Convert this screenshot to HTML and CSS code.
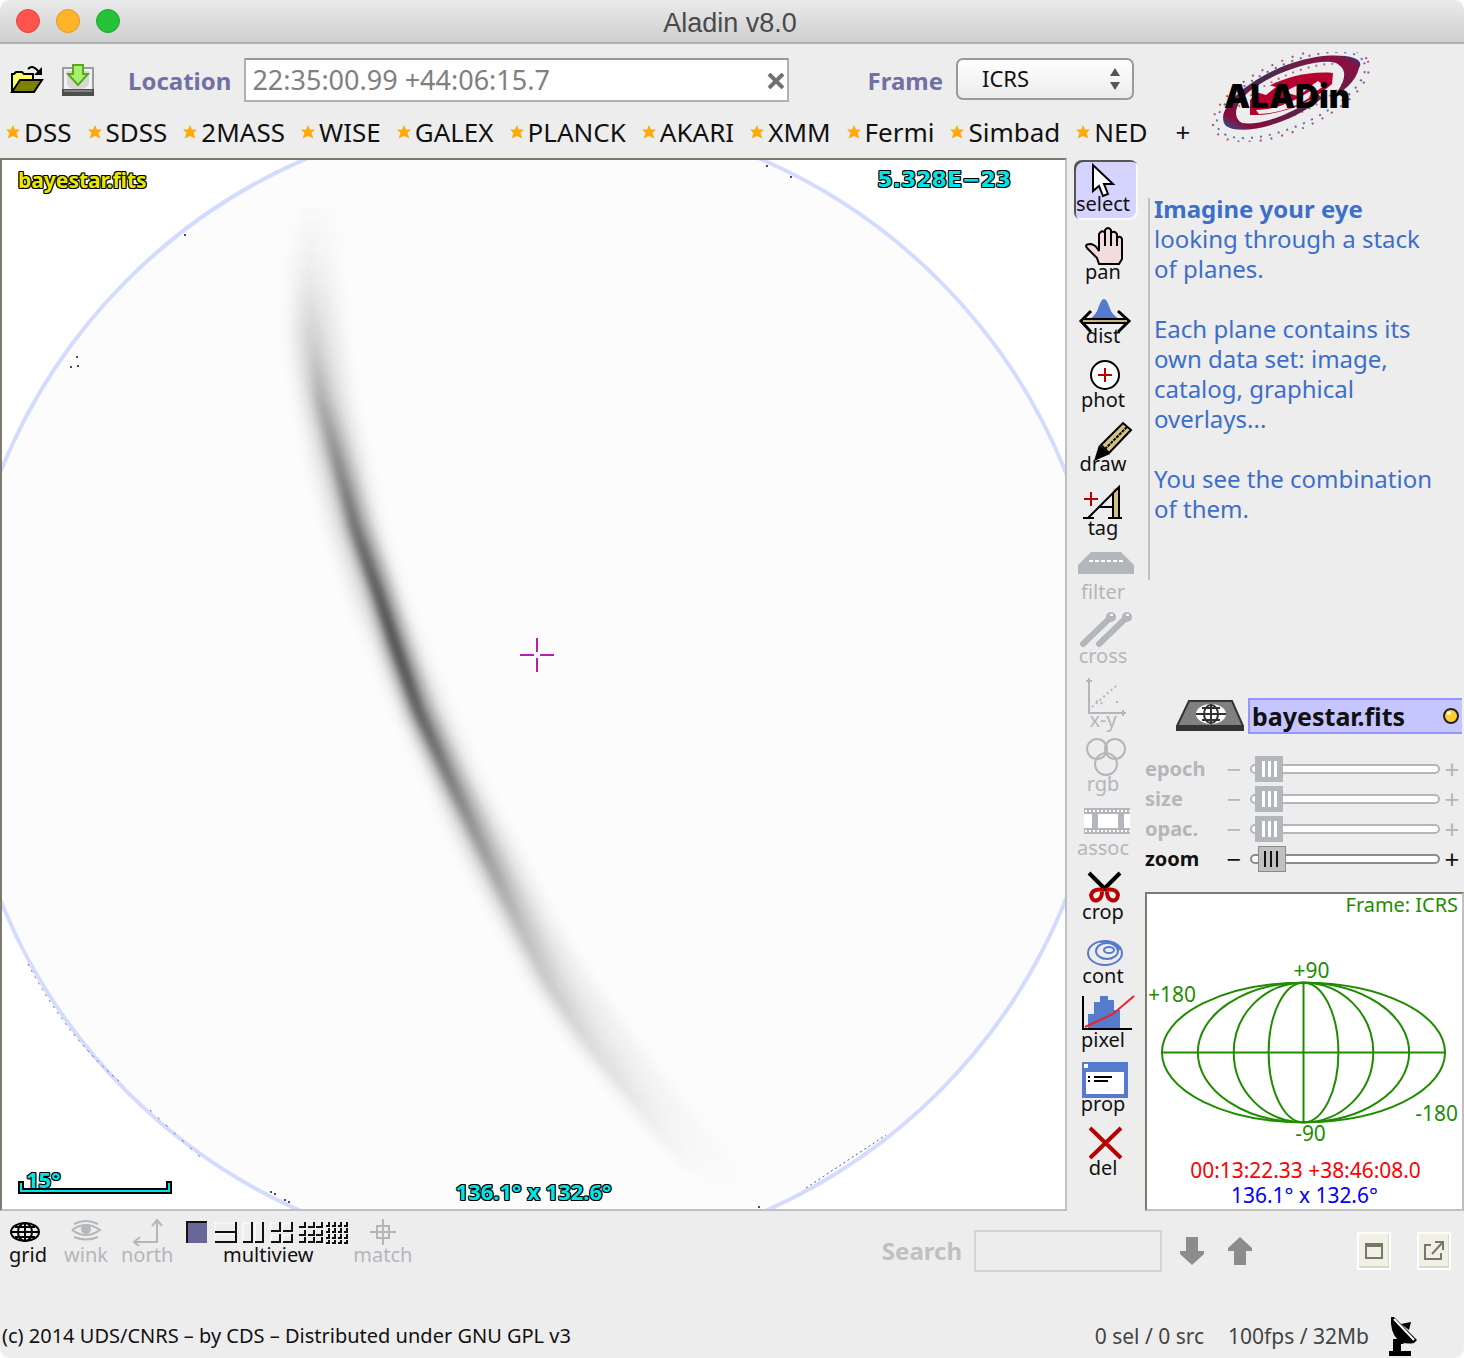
FILE: index.html
```html
<!DOCTYPE html>
<html lang="en">
<head>
<meta charset="utf-8">
<title>Aladin v8.0</title>
<link rel="stylesheet" href="styles.css">
</head>
<body>
<div class="window">
  <header class="titlebar">
    <div class="lights">
      <button class="light close" aria-label="Close"></button>
      <button class="light minimize" aria-label="Minimize"></button>
      <button class="light maximize" aria-label="Maximize"></button>
    </div>
    <h1 class="title">Aladin v8.0</h1>
  </header>

  <div class="top">
    <div class="top-left">
      <div class="location-row">
        <button class="plain" aria-label="Open">
          <svg width="34" height="32" viewBox="0 0 34 32">
            <path d="M2 28V10h2l2-2h6l2 2h9v6" fill="#ffff63" stroke="#000" stroke-width="2"/>
            <path d="M2 28l8-12h22l-8 12z" fill="#808000" stroke="#000" stroke-width="2"/>
            <path d="M18 5q5-5 11 3" fill="none" stroke="#000" stroke-width="2"/>
            <path d="M32 3v8h-8z"/>
          </svg>
        </button>
        <button class="plain save" aria-label="Save">
          <svg width="34" height="34" viewBox="0 0 34 34">
            <rect x="2" y="5" width="30" height="27" fill="#f2f2f2" stroke="#9a9d9a" stroke-width="2"/>
            <path d="M6 8h22v13q-3 5-8 5h-6q-6 0-8-5z" fill="#d5d8d5"/>
            <rect x="1" y="26" width="32" height="7" fill="#4b504b"/>
            <path d="M3 28h28" stroke="#7d827d" stroke-width="2"/>
            <path d="M12 2h10v9h5l-10 11L7 11h5z" fill="#a6f06a" stroke="#5aa61e" stroke-width="2"/>
          </svg>
        </button>
        <label class="heading" for="location">Location</label>
        <div class="location-box">
          <input id="location" type="text" value="22:35:00.99 +44:06:15.7">
          <button class="clear" aria-label="Clear location"><svg width="18" height="16" viewBox="0 0 18 16"><path d="M2 1l14 14M16 1L2 15" stroke="#707070" stroke-width="4"/></svg></button>
        </div>
        <label class="heading frame-label" for="frame">Frame</label>
        <div class="frame-box">
          <select id="frame"><option>ICRS</option></select>
          <svg class="updown" width="10" height="22" viewBox="0 0 10 22"><path d="M5 0l5 8H0zM5 22l5-8H0z" fill="#555"/></svg>
        </div>
      </div>
      <nav class="bookmarks">
        <a href="#dss"><svg class="star" viewBox="0 0 14 14"><path d="M7 0l2 4.600h5l-3.500 3.400 2 5.500L7 11l-5.500 2.500 2-5.500L0 4.600h5z"/></svg>DSS</a>
        <a href="#sdss"><svg class="star" viewBox="0 0 14 14"><path d="M7 0l2 4.600h5l-3.500 3.400 2 5.500L7 11l-5.500 2.500 2-5.500L0 4.600h5z"/></svg>SDSS</a>
        <a href="#2mass"><svg class="star" viewBox="0 0 14 14"><path d="M7 0l2 4.600h5l-3.500 3.400 2 5.500L7 11l-5.500 2.500 2-5.500L0 4.600h5z"/></svg>2MASS</a>
        <a href="#wise"><svg class="star" viewBox="0 0 14 14"><path d="M7 0l2 4.600h5l-3.500 3.400 2 5.500L7 11l-5.500 2.500 2-5.500L0 4.600h5z"/></svg>WISE</a>
        <a href="#galex"><svg class="star" viewBox="0 0 14 14"><path d="M7 0l2 4.600h5l-3.500 3.400 2 5.500L7 11l-5.500 2.500 2-5.500L0 4.600h5z"/></svg>GALEX</a>
        <a href="#planck"><svg class="star" viewBox="0 0 14 14"><path d="M7 0l2 4.600h5l-3.500 3.400 2 5.500L7 11l-5.500 2.500 2-5.500L0 4.600h5z"/></svg>PLANCK</a>
        <a href="#akari"><svg class="star" viewBox="0 0 14 14"><path d="M7 0l2 4.600h5l-3.500 3.400 2 5.500L7 11l-5.500 2.500 2-5.500L0 4.600h5z"/></svg>AKARI</a>
        <a href="#xmm"><svg class="star" viewBox="0 0 14 14"><path d="M7 0l2 4.600h5l-3.500 3.400 2 5.500L7 11l-5.500 2.500 2-5.500L0 4.600h5z"/></svg>XMM</a>
        <a href="#fermi"><svg class="star" viewBox="0 0 14 14"><path d="M7 0l2 4.600h5l-3.500 3.400 2 5.500L7 11l-5.500 2.500 2-5.500L0 4.600h5z"/></svg>Fermi</a>
        <a href="#simbad"><svg class="star" viewBox="0 0 14 14"><path d="M7 0l2 4.600h5l-3.500 3.400 2 5.500L7 11l-5.500 2.500 2-5.500L0 4.600h5z"/></svg>Simbad</a>
        <a href="#ned"><svg class="star" viewBox="0 0 14 14"><path d="M7 0l2 4.600h5l-3.500 3.400 2 5.500L7 11l-5.500 2.500 2-5.500L0 4.600h5z"/></svg>NED</a>
        <button class="plain add" aria-label="Add bookmark">+</button>
      </nav>
    </div>
    <svg class="logo" width="172" height="90" viewBox="1204 52 172 90" role="img" aria-label="Aladin">
      <defs>
        <linearGradient id="arm" x1="0" y1="1" x2="1" y2="0">
          <stop offset="0" stop-color="#1f5f9a"/><stop offset=".12" stop-color="#8a0a3a"/><stop offset=".5" stop-color="#4a2a50"/><stop offset=".9" stop-color="#8a1040"/><stop offset="1" stop-color="#2a3a80"/>
        </linearGradient>
      </defs>
      <g transform="rotate(-24 1291 95)" fill="none">
        <ellipse cx="1291" cy="95" rx="84" ry="35" stroke="#b05070" stroke-width="2" stroke-dasharray="2 9"/>
        <ellipse cx="1291" cy="95" rx="80" ry="31" stroke="#5a70b0" stroke-width="2" stroke-dasharray="2 7"/>
        <ellipse cx="1291" cy="95" rx="62" ry="20" stroke="#b86a88" stroke-width="2" stroke-dasharray="2 6"/>
      </g>
      <path d="M1226 126C1210 108 1262 66 1316 57C1345 53 1366 58 1359 68C1356 82 1342 92 1333 97C1344 84 1350 70 1336 63C1320 58 1282 70 1260 84C1236 98 1230 116 1242 123C1262 126 1298 112 1318 94L1322 98C1298 120 1244 138 1226 126z" fill="url(#arm)"/>
      <path d="M1250 115V100C1264 84 1300 70 1333 73L1332 84C1310 104 1280 116 1250 115z" fill="#b8002e"/>
      <path d="M1256 110q26 0 56-20l-3 8q-22 15-50 16z" fill="#ededed"/>
      <path d="M1284 92l16-8 12 2-14 10z" fill="#f3dfe4"/>
      <path d="M1256 92l12-7 8 2-10 8zM1308 88l10-7 6 5-9 6z" fill="#ededed"/>
      <text x="1224" y="108" class="logo-text">ALADin</text>
    </svg>
  </div>

  <main class="main">
    <section class="view" aria-label="Sky view">
      <svg class="sky" viewBox="2 160 1063 1049" preserveAspectRatio="xMidYMid slice">
        <defs>
          <filter id="soft" x="-20%" y="-20%" width="140%" height="140%"><feGaussianBlur stdDeviation="7"/></filter>
          <filter id="mid" x="-20%" y="-20%" width="140%" height="140%"><feGaussianBlur stdDeviation="6"/></filter>
          <filter id="fine" x="-20%" y="-20%" width="140%" height="140%"><feGaussianBlur stdDeviation="3"/></filter>
          <linearGradient id="halo" gradientUnits="userSpaceOnUse" x1="0" y1="190" x2="0" y2="1200">
            <stop offset="0" stop-opacity="0"/><stop offset=".06" stop-opacity=".02"/><stop offset=".14" stop-opacity=".07"/><stop offset=".22" stop-opacity=".09"/><stop offset=".5" stop-opacity=".09"/><stop offset=".68" stop-opacity=".09"/><stop offset=".8" stop-opacity=".06"/><stop offset=".9" stop-opacity=".03"/><stop offset="1" stop-opacity="0"/>
          </linearGradient>
          <linearGradient id="body" gradientUnits="userSpaceOnUse" x1="0" y1="200" x2="0" y2="1180">
            <stop offset="0" stop-opacity="0"/><stop offset=".08" stop-opacity=".02"/><stop offset=".16" stop-opacity=".1"/><stop offset=".26" stop-opacity=".25"/><stop offset=".36" stop-opacity=".34"/><stop offset=".46" stop-opacity=".38"/><stop offset=".54" stop-opacity=".34"/><stop offset=".64" stop-opacity=".23"/><stop offset=".73" stop-opacity=".14"/><stop offset=".85" stop-opacity=".06"/><stop offset=".95" stop-opacity=".01"/><stop offset="1" stop-opacity="0"/>
          </linearGradient>
          <linearGradient id="core" gradientUnits="userSpaceOnUse" x1="0" y1="200" x2="0" y2="1180">
            <stop offset="0" stop-opacity="0"/><stop offset=".14" stop-opacity=".02"/><stop offset=".24" stop-opacity=".12"/><stop offset=".36" stop-opacity=".3"/><stop offset=".43" stop-opacity=".4"/><stop offset=".49" stop-opacity=".38"/><stop offset=".54" stop-opacity=".3"/><stop offset=".64" stop-opacity=".16"/><stop offset=".75" stop-opacity=".06"/><stop offset=".88" stop-opacity=".03"/><stop offset="1" stop-opacity="0"/>
          </linearGradient>
        </defs>
        <rect x="-500" y="-500" width="2100" height="2400" fill="#fff"/>
        <circle cx="533" cy="686" r="574" fill="#fcfcfc" stroke="#d3dcff" stroke-width="4"/>
        <path fill="url(#halo)" filter="url(#soft)" d="M298 190L289 260L290 340L300 400L312 460L330 530L353 600L375 650L398 710L427 773L455 837L497 917L533 983L567 1033L607 1083L650 1133L710 1190L760 1190L708 1133L667 1083L627 1033L590 983L549 917L508 837L474 773L447 710L422 650L402 600L380 530L364 460L350 400L342 340L337 260L336 190z"/>
        <g fill="none" stroke-linejoin="round">
          <path stroke="url(#body)" stroke-width="24" filter="url(#mid)" d="M312 200L311 270L313 337L323 400L339 460L357 527L380 593L398 650L420 710L449 773L480 837L519 917L553 983L586 1033L625 1083L653 1117L700 1180"/>
          <path stroke="url(#core)" stroke-width="11" filter="url(#fine)" d="M311 200L309 270L312 337L321 400L337 460L355 527L378 593L397 650L418 710L447 773L477 837L515 917L548 983L581 1033L621 1083L648 1117L690 1170"/>
        </g>
        <g fill="none" stroke="#55589a" stroke-width="1">
          <path stroke-dasharray="2 5" d="M28 964Q66 1036 120 1082"/>
          <path stroke-dasharray="2 9" d="M150 1110L200 1157"/>
          <path stroke-dasharray="2 3" d="M806 1188L886 1135"/>
        </g>
        <g fill="#444a77">
          <path d="M70 366h2v2h-2zM76 356h2v2h-2zM77 365h2v2h-2zM184 234h2v2h-2zM766 165h2v2h-2zM790 176h2v2h-2zM270 1191h2v2h-2zM274 1193h2v2h-2zM284 1199h2v2h-2zM288 1201h2v2h-2zM758 1206h2v2h-2z"/>
        </g>
        <path d="M520 655h14M540 655h14M537 638v14M537 658v14" stroke="#b81cb8" stroke-width="2" fill="none"/>
      </svg>
      <div class="overlay">
        <div class="overlay-row"><span class="outlined yellow">bayestar.fits</span><span class="outlined cyan pixel-value">5.328E−23</span></div>
        <div class="overlay-row bottom">
          <div class="scale"><span class="outlined cyan">15°</span>
            <svg width="154" height="14" viewBox="0 0 154 14"><path d="M3 0v10h148V0" fill="none" stroke="#000" stroke-width="6"/><path d="M3 2v8h148V2" fill="none" stroke="#00e5e5" stroke-width="2"/></svg>
          </div>
          <span class="outlined cyan fov">136.1° x 132.6°</span>
          <span></span>
        </div>
      </div>
    </section>

    <div class="tools" role="toolbar" aria-label="Tools">
      <button class="tool selected"><svg class="ico" viewBox="0 0 64 34"><path d="M19 5v26l6-5 4 10 5-2-4-10h9z" fill="#fff" stroke="#000" stroke-width="2"/></svg><span>select</span></button>
      <button class="tool"><svg class="ico" viewBox="0 0 64 38"><path d="M25 40l-2-6-10-10q-3-4 4-4 5 1 8 7V10q3-5 6-1V6q3-4 6 0v3q3-3 6 1v4q3-3 5 1v20l-3 5z" fill="#f2dcdc" stroke="#000" stroke-width="2"/><path d="M31 8v14M37 8v14M43 11v11" stroke="#000" stroke-width="2"/></svg><span>pan</span></button>
      <button class="tool"><svg class="ico" viewBox="0 0 64 38"><path d="M15 31q7-3 10-13 5-14 10 0 3 10 11 13z" fill="#567bcc"/><path d="M8 33h45" stroke="#000" stroke-width="6"/><path d="M17 23L7 33l10 11M44 23l11 10-11 11" fill="none" stroke="#000" stroke-width="3"/><path d="M9 33h44" stroke="#c9b678" stroke-width="2"/></svg><span>dist</span></button>
      <button class="tool"><svg class="ico" viewBox="0 0 64 38"><circle cx="31" cy="23" r="14" fill="#fff" stroke="#000" stroke-width="2"/><path d="M24 23h14M31 16v14" stroke="#b90000" stroke-width="2"/></svg><span>phot</span></button>
      <button class="tool"><svg class="ico" viewBox="0 0 64 38"><path d="M20 45l5-16 11 9z"/><path d="M27 29L49 7l8 7-22 23z" fill="#d3c088" stroke="#000" stroke-width="2"/><path d="M31 33L53 11" stroke="#000" stroke-width="2" stroke-dasharray="3 1"/></svg><span>draw</span></button>
      <button class="tool"><svg class="ico" viewBox="0 0 64 38"><path d="M10 19h14M17 12v14" stroke="#b90000" stroke-width="2"/><path d="M39 9l6-2v31h-6z" fill="#d3c088"/><path d="M9 38h11M14 38L45 7v31M24 27h15M39 13v25M34 38h14" fill="none" stroke="#000" stroke-width="2"/></svg><span>tag</span></button>
      <button class="tool" disabled><svg class="ico" viewBox="0 0 64 38"><path d="M4 30v-9L17 8h30l13 13v9z" fill="#b3b7bb"/><path d="M15 17h34" stroke="#fff" stroke-width="2" stroke-dasharray="4 2"/></svg><span>filter</span></button>
      <button class="tool" disabled><svg class="ico" viewBox="0 0 64 38"><path d="M9 36L37 9M25 36L53 9" stroke="#b3b7bb" stroke-width="6" stroke-linecap="round"/><circle cx="37" cy="9" r="5" fill="#b3b7bb"/><circle cx="53" cy="9" r="5" fill="#b3b7bb"/><path d="M36 7h3M52 7h3" stroke="#fff" stroke-width="2"/></svg><span>cross</span></button>
      <button class="tool" disabled><svg class="ico" viewBox="0 0 64 38"><path d="M15 6v35h37M12 9h6M49 38v6" fill="none" stroke="#b3b7bb" stroke-width="2"/><path d="M18 35L42 14M22 29l8 3M42 30h2" fill="none" stroke="#b3b7bb" stroke-width="2" stroke-dasharray="2 3"/></svg><span>x-y</span></button>
      <button class="tool" disabled><svg class="ico" viewBox="0 0 64 38"><g fill="none" stroke="#b3b7bb" stroke-width="2"><circle cx="23" cy="13" r="10"/><circle cx="41" cy="13" r="10"/><circle cx="32" cy="28" r="11"/></g></svg><span>rgb</span></button>
      <button class="tool" disabled><svg class="ico" viewBox="0 0 64 38"><path d="M10 8h46v26H10z" fill="#b3b7bb"/><path d="M10 14h8v14h-8zM24 14h20v14H24zM50 14h6v14h-6z" fill="#fff"/><path d="M11 11h45M11 31h45" stroke="#fff" stroke-width="2" stroke-dasharray="2 2"/></svg><span>assoc</span></button>
      <button class="tool"><svg class="ico" viewBox="0 0 64 38"><path d="M15 9l17 17M46 9L29 26" stroke="#000" stroke-width="4"/><path d="M30 26q-11-2-13 5 1 7 7 5 4-2 4-8M31 26q12-2 13 5-1 7-7 5-4-2-4-8" fill="none" stroke="#b90000" stroke-width="4"/></svg><span>crop</span></button>
      <button class="tool"><svg class="ico" viewBox="0 0 64 38"><g fill="none" stroke="#567bcc" stroke-width="2"><ellipse cx="31" cy="25" rx="17" ry="12"/><ellipse cx="33" cy="23" rx="11" ry="8"/><ellipse cx="35" cy="22" rx="5" ry="3"/><path d="M26 14q14-2 20 8"/></g></svg><span>cont</span></button>
      <button class="tool"><svg class="ico" viewBox="0 0 64 38"><path d="M14 36V22h6V10h6V4h8v4h6v10h6v18z" fill="#567bcc"/><path d="M9 4v33h49" fill="none" stroke="#000" stroke-width="2"/><path d="M11 35l28-13L60 4" fill="none" stroke="#e22" stroke-width="2"/></svg><span>pixel</span></button>
      <button class="tool"><svg class="ico" viewBox="0 0 64 38"><path d="M8 6h46v36H8z" fill="#567bcc"/><path d="M10 8h4v4h-4zM12 16h38v22H12z" fill="#fff"/><path d="M14 21h2M20 21h18M14 25h2M20 25h14" stroke="#000" stroke-width="2"/></svg><span>prop</span></button>
      <button class="tool"><svg class="ico" viewBox="0 0 64 38"><path d="M16 8l31 30M47 8L16 38" stroke="#b90000" stroke-width="4"/></svg><span>del</span></button>
    </div>

    <aside class="side">
      <div class="help">
        <p><strong>Imagine your eye</strong><br>looking through a stack<br>of planes.</p>
        <p>Each plane contains its<br>own data set: image,<br>catalog, graphical<br>overlays...</p>
        <p>You see the combination<br>of them.</p>
      </div>

      <div class="plane">
        <svg width="68" height="32" viewBox="0 0 68 32"><path d="M1 26L13 1h43l11 25z" fill="#808080" stroke="#333" stroke-width="2"/><path d="M0 26h68v5H0z" fill="#333"/><ellipse cx="35" cy="14" rx="15" ry="10" fill="#fff"/><path d="M20 14h30M35 4v20M26 8h18M26 20h18" stroke="#333" stroke-width="2"/><ellipse cx="35" cy="14" rx="7" ry="9" fill="none" stroke="#333" stroke-width="2"/></svg>
        <button class="plane-name">bayestar.fits<svg width="18" height="18" viewBox="0 0 18 18"><circle cx="9" cy="9" r="7" fill="#ffce2e" stroke="#222" stroke-width="2"/><path d="M5 6h4" stroke="#fff" stroke-width="3"/></svg></button>
      </div>

      <div class="sliders">
        <div class="slider-row off"><label for="epoch">epoch</label><span class="sign">−</span><input id="epoch" type="range" value="2" disabled><span class="sign">+</span></div>
        <div class="slider-row off"><label for="size">size</label><span class="sign">−</span><input id="size" type="range" value="2" disabled><span class="sign">+</span></div>
        <div class="slider-row off"><label for="opac">opac.</label><span class="sign">−</span><input id="opac" type="range" value="2" disabled><span class="sign">+</span></div>
        <div class="slider-row"><label for="zoom">zoom</label><span class="sign">−</span><input id="zoom" type="range" value="4"><span class="sign">+</span></div>
      </div>

      <svg class="map" viewBox="1146 893 316 316" role="img" aria-label="All-sky grid">
        <g fill="none" stroke="#1f8c00" stroke-width="2">
          <ellipse cx="1303" cy="1052" rx="142" ry="70"/>
          <ellipse cx="1303" cy="1052" rx="106" ry="70"/>
          <ellipse cx="1303" cy="1052" rx="70" ry="70"/>
          <ellipse cx="1303" cy="1052" rx="35" ry="70"/>
          <path d="M1303 982v140M1161 1052h284"/>
        </g>
        <g class="map-text" fill="#1f8c00">
          <text x="1458" y="911" text-anchor="end" class="map-frame">Frame: ICRS</text>
          <text x="1311" y="977" text-anchor="middle">+90</text>
          <text x="1147" y="1001">+180</text>
          <text x="1458" y="1121" text-anchor="end">-180</text>
          <text x="1310" y="1141" text-anchor="middle">-90</text>
          <text x="1305" y="1178" text-anchor="middle" fill="#f00">00:13:22.33 +38:46:08.0</text>
          <text x="1304" y="1203" text-anchor="middle" fill="#00f">136.1° x 132.6°</text>
        </g>
      </svg>
    </aside>
  </main>

  <div class="lower">
    <div class="lower-tools">
      <button class="low"><svg width="38" height="28" viewBox="0 0 38 28"><g fill="none" stroke="#000" stroke-width="2"><ellipse cx="16" cy="14" rx="14" ry="9"/><ellipse cx="16" cy="14" rx="7" ry="9"/><path d="M16 5v18M2 14h28M6 9h20M6 19h20"/></g></svg><span>grid</span></button>
      <button class="low wink" disabled><svg width="32" height="28" viewBox="0 0 32 28"><g fill="none" stroke="#b3b7bb" stroke-width="2"><path d="M2 12q14-10 28 0-14 10-28 0M4 6q12-6 24 0M4 19q12 5 24 0"/><circle cx="16" cy="11" r="4" fill="#b3b7bb"/></g></svg><span>wink</span></button>
      <button class="low north" disabled><svg width="32" height="28" viewBox="0 0 32 28"><path d="M26 4v20H4M21 8l5-6 5 6M9 19l-6 5 6 5" fill="none" stroke="#b3b7bb" stroke-width="2"/></svg><span>north</span></button>
      <button class="low multi"><svg width="164" height="28" viewBox="0 0 164 28">
        <path d="M1 5h20v20H1z" fill="#666699"/><path d="M1 25V4h20" fill="none" stroke="#111" stroke-width="2"/>
        <g fill="none" stroke="#fff" stroke-width="1"><path d="M29 14V5h20M29 24v-8h20M57 24V5h8M69 24V5h6M85 13V5h9M97 13V5h8M85 24v-7h9M97 24v-7h8"/></g>
        <g fill="none" stroke="#111" stroke-width="2"><path d="M29 14h21V4M50 14v10H29M66 4v20h-9M77 4v20h-8M85 13h9V4M106 4v9h-9M85 24h9v-8M106 16v8h-9M113 9h6V4M122 9h6V4M130 9h6V4M113 17h6v-5M122 17h6v-5M130 17h6v-5M113 24h6v-5M122 24h6v-5M130 24h6v-5"/><path d="M140 8h3V4M146 8h3V4M152 8h3V4M158 8h3V4M140 14h3v-4M146 14h3v-4M152 14h3v-4M158 14h3v-4M140 20h3v-4M146 20h3v-4M152 20h3v-4M158 20h3v-4M140 25h3v-3M146 25h3v-3M152 25h3v-3M158 25h3v-3"/></g>
      </svg><span>multiview</span></button>
      <button class="low match" disabled><svg width="32" height="28" viewBox="0 0 32 28"><path d="M3 14h26M16 1v26M10 8h12v12H10z" fill="none" stroke="#b3b7bb" stroke-width="2"/></svg><span>match</span></button>
    </div>
    <div class="search">
      <label for="search">Search</label>
      <input id="search" type="text" disabled>
      <button class="plain" aria-label="Next"><svg width="24" height="28" viewBox="0 0 24 28"><path d="M6 0h12v14h6v3L12 28 0 17v-3h6z" fill="#8c8c8c"/></svg></button>
      <button class="plain up" aria-label="Previous"><svg width="24" height="28" viewBox="0 0 24 28"><path d="M6 28h12V14h6v-3L12 0 0 11v3h6z" fill="#8c8c8c"/></svg></button>
      <button class="square first" aria-label="Single window"><svg width="20" height="20" viewBox="0 0 20 20"><path d="M2 4h16v13H2z" fill="none" stroke="#77776c" stroke-width="2"/><path d="M1 4h18" stroke="#77776c" stroke-width="4"/></svg></button>
      <button class="square" aria-label="Detach"><svg width="22" height="22" viewBox="0 0 22 22"><path d="M8 5H2v14h16v-6M9 14L19 3M12 2h8v8" fill="none" stroke="#77776c" stroke-width="2"/></svg></button>
    </div>
  </div>

  <footer class="status">
    <span class="copyright">(c) 2014 UDS/CNRS – by CDS – Distributed under GNU GPL v3</span>
    <span>0 sel / 0 src</span>
    <span>100fps / 32Mb</span>
    <svg width="30" height="42" viewBox="0 0 30 42"><path d="M2 2h3l23 23-3 3Q14 30 8 24 1 16 2 2z"/><path d="M5 4l20 21" stroke="#fff" stroke-width="2"/><path d="M12 9l10-2-2 8M4 24h8l3 5h-3v7h10v5H0v-5h4z"/></svg>
  </footer>
</div>
</body>
</html>
```
FILE: styles.css
```css
* { box-sizing: border-box; }

html { background: #fff; }

body {
  margin: 0;
  font-family: "Noto Sans", "Open Sans", sans-serif;
  font-size: 20px;
  line-height: 24px;
  color: #111;
}

button, input, select { font: inherit; color: inherit; }
svg { display: block; flex: none; }

.window {
  display: flex;
  flex-direction: column;
  min-height: 100vh;
  background: #ededed;
  border-radius: 10px;
  overflow: hidden;
}

.plain { padding: 0; border: 0; background: none; }

/* title bar */
.titlebar {
  display: grid;
  grid-template-columns: 1fr auto 1fr;
  align-items: center;
  height: 44px;
  border-bottom: 2px solid #b1b1b1;
  background: linear-gradient(#eaeaea, #cfcfcf);
}
.lights { display: flex; gap: 16px; padding-left: 16px; }
.light { width: 24px; height: 24px; padding: 0; border: 1px solid; border-radius: 50%; }
.close { background: #ff544d; border-color: #e2443f; }
.minimize { background: #ffb429; border-color: #e09b1d; }
.maximize { background: #25c138; border-color: #1da92e; }
.title {
  margin: 0;
  padding: 4px 4px 0 0;
  font: 27px/32px "Liberation Sans", sans-serif;
  color: #4a4a4a;
}

/* location and bookmarks */
.top { display: flex; height: 114px; }
.top-left { flex: 1; }
.location-row {
  display: flex;
  align-items: center;
  height: 44px;
  margin: 14px 70px 0 10px;
}
.save { margin-left: 17px; }
.heading { font-size: 24px; font-weight: 700; color: #7070a6; padding-top: 2px; }
.save + .heading { margin-left: 33px; }
.location-box { position: relative; flex: 1; margin-left: 13px; }
.location-box input {
  display: block;
  width: 100%;
  height: 44px;
  padding: 0 34px 2px 6px;
  border: 2px solid #b0b0b0;
  border-top-color: #979797;
  background: #fff;
  font-size: 27px;
  color: #808080;
}
.clear { position: absolute; right: 4px; top: 15px; padding: 0; border: 0; background: none; }
.frame-label { margin-left: 78px; }
.frame-box { position: relative; margin-left: 13px; width: 178px; margin-bottom: 2px; }
.frame-box select {
  appearance: none;
  width: 100%;
  height: 42px;
  padding: 0 24px 2px;
  border: 2px solid #9a9a9a;
  border-radius: 7px;
  background: linear-gradient(#fff, #ececec);
  font-size: 22px;
}
.updown { position: absolute; right: 14px; top: 10px; }
.bookmarks {
  display: flex;
  align-items: center;
  gap: 16px;
  margin-top: 14px;
  padding-left: 6px;
  font-size: 26px;
  line-height: 32px;
}
.bookmarks a { display: flex; align-items: center; gap: 4px; color: inherit; text-decoration: none; }
.star { width: 14px; height: 14px; fill: #ffaa0c; }
.add { margin-left: 12px; }
.logo { margin: 8px 88px 0 0; }
.logo-text { font: 900 33px Inter, sans-serif; }

/* main area */
.main { display: flex; flex: 1; }
.view {
  position: relative;
  flex: 1;
  border: 2px solid #c0c0c0;
  border-top-color: #7d7b70;
  border-left-color: #7d7b70;
  overflow: hidden;
}
.sky { position: absolute; inset: 0; width: 100%; height: 100%; }
.overlay {
  position: absolute;
  inset: 0;
  display: flex;
  flex-direction: column;
  justify-content: space-between;
  padding: 8px 54px 6px 16px;
}
.overlay-row { display: flex; justify-content: space-between; }
.overlay-row.bottom {
  display: grid;
  grid-template-columns: 1fr auto 1fr;
  align-items: end;
  margin-right: -38px;
}
.outlined {
  font-size: 22px;
  font-weight: 700;
  text-shadow: 1px 0 #000, -1px 0 #000, 0 1px #000, 0 -1px #000, 1px 1px #000, -1px -1px #000, 1px -1px #000, -1px 1px #000;
}
.yellow { font-size: 21px; color: #e8e800; }
.cyan { color: #00e5e5; }
.pixel-value { font-family: "DejaVu Sans", sans-serif; }
.scale { padding-bottom: 8px; }
.scale span { display: block; margin: 0 0 -8px 8px; line-height: 20px; }

/* tool column */
.tools { width: 77px; padding: 2px 6px 27px 7px; }
.tool {
  display: flex;
  flex-direction: column;
  width: 64px;
  height: 64px;
  padding: 0 6px 0 0;
  border: 0;
  background: none;
  line-height: 20px;
  text-align: center;
}
.ico { width: 64px; height: 38px; overflow: visible; }
.tool span { position: relative; }
.tool.selected {
  height: 60px;
  margin-bottom: 4px;
  border-radius: 8px;
  background: #d5d3ff;
  box-shadow: inset 2px 2px #555, inset -2px -2px #f8f8ff;
}
.selected .ico { height: 34px; }
.tool:disabled, .low:disabled { color: #b3b7bb; }

/* right-hand panel */
.side { display: flex; flex-direction: column; width: 320px; padding-left: 1px; }
.help {
  height: 382px;
  margin: 40px 0 auto 3px;
  padding-left: 4px;
  border-left: 2px solid #c0c0c0;
  font-size: 24px;
  line-height: 30px;
  color: #3c6fca;
  white-space: nowrap;
}
.help p { margin: 0 0 30px; }
.help p:first-child { margin-top: -4px; }
.plane { display: flex; align-items: center; gap: 4px; padding: 0 2px 0 31px; }
.plane-name {
  display: flex;
  flex: 1;
  align-items: center;
  justify-content: space-between;
  height: 36px;
  padding: 0 2px;
  border: 2px solid #9494ff;
  border-right: 0;
  background: #c6c6ff;
  font-size: 25px;
  font-weight: 700;
}
.sliders { margin: 20px 2px 18px 0; }
.slider-row { display: flex; align-items: center; height: 30px; }
.slider-row label { width: 79px; font-weight: 700; }
.sign { width: 20px; text-align: center; font-size: 26px; }
.slider-row.off { color: #b3b7bb; }
.slider-row input {
  appearance: none;
  flex: 1;
  min-width: 0;
  height: 10px;
  margin: 0 2px 0 6px;
  border: 2px solid #8c8c86;
  border-radius: 5px;
  background: #fff;
}
.slider-row.off input { border-color: #b3b7bb; }
.slider-row input::-webkit-slider-thumb {
  appearance: none;
  width: 28px;
  height: 26px;
  border: 1px solid #8c8c86;
  background:
    linear-gradient(#111, #111) 5px 4px / 2px 16px no-repeat,
    linear-gradient(#111, #111) 11px 4px / 2px 16px no-repeat,
    linear-gradient(#111, #111) 17px 4px / 2px 16px no-repeat,
    #c0c0c0;
}
.slider-row.off input::-webkit-slider-thumb {
  border-color: #b3b7bb;
  background:
    linear-gradient(#fff, #fff) 6px 4px / 3px 16px no-repeat,
    linear-gradient(#fff, #fff) 12px 4px / 3px 16px no-repeat,
    linear-gradient(#fff, #fff) 18px 4px / 3px 16px no-repeat,
    #b3b7bb;
}
.map {
  width: 100%;
  border: 2px solid #c0c0c0;
  border-top-color: #7d7b70;
  border-left-color: #7d7b70;
  background: #fff;
}
.map-text { font-size: 21px; }
.map-frame { font-size: 20px; }

/* lower bar */
.lower { display: flex; justify-content: space-between; height: 80px; padding: 7px 13px 0 9px; }
.lower-tools { display: flex; align-items: flex-start; gap: 11px; }
.low {
  display: flex;
  flex-direction: column;
  align-items: center;
  padding: 0;
  border: 0;
  background: none;
  line-height: 24px;
}
.low span { margin-top: -3px; }
.low.wink { margin-left: 6px; }
.multi, .north { margin-left: 2px; }
.match { margin-left: -8px; }
.search { display: flex; align-items: center; height: 66px; }
.search label { font-size: 24px; font-weight: 700; color: #c0c0c0; }
.search input {
  width: 188px;
  height: 42px;
  margin: 0 18px 0 12px;
  border: 2px solid #d3d3d3;
  background: #ededed;
}
.up { margin-left: 24px; }
.square {
  display: grid;
  place-items: center;
  width: 34px;
  height: 38px;
  margin-left: 26px;
  padding: 0;
  border: 2px solid #fff;
  background: #f0f0e4;
  box-shadow: inset -1px -2px #d8d8c8;
}
.square.first { margin-left: 105px; }

/* status line */
.status {
  display: flex;
  align-items: center;
  gap: 24px;
  height: 67px;
  padding: 22px 45px 0 2px;
  font-size: 21px;
  color: #444;
}
.copyright { flex: 1; font-size: 20px; color: #111; }
.status svg { margin-left: -4px; }
```
